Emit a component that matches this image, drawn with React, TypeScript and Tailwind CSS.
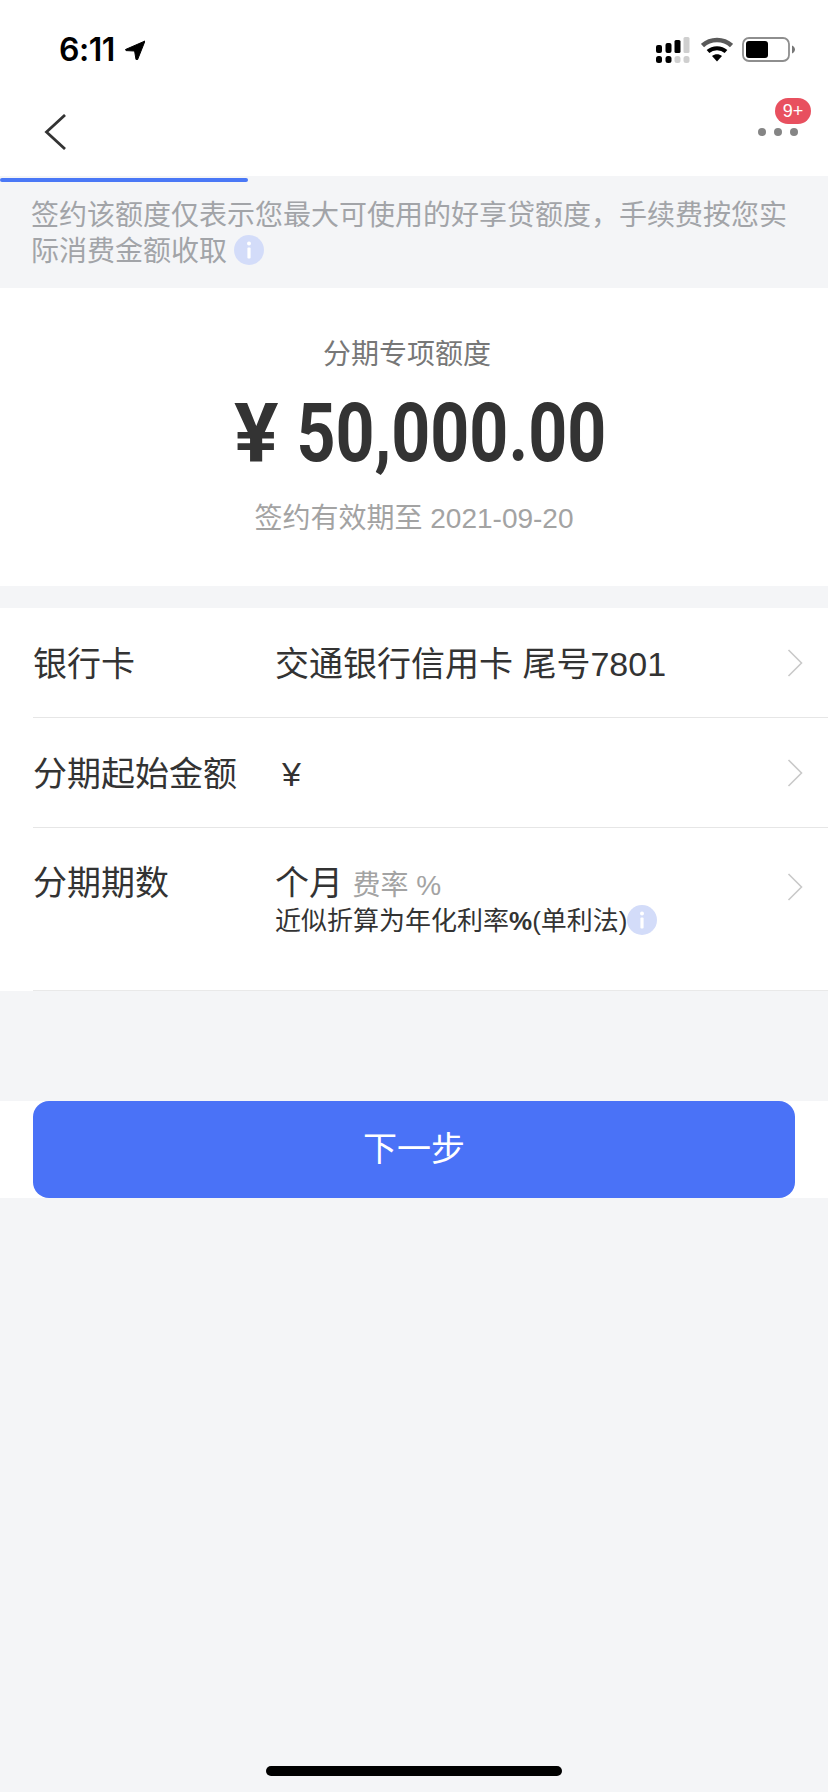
import type { ReactNode } from 'react';

function InfoIcon({ className }: { className?: string }) {
  return (
    <svg className={className} viewBox="0 0 30 30" fill="none">
      <circle cx="15" cy="15" r="15" fill="#d3dcf9" />
      <circle cx="15" cy="8.5" r="2" fill="#fff" />
      <rect x="13.4" y="12.5" width="3.2" height="11" rx="1" fill="#fff" />
    </svg>
  );
}

function Chevron({ className }: { className?: string }) {
  return (
    <svg className={className} viewBox="0 0 16 28" fill="none">
      <path d="M1.5 1 L14.5 14 L1.5 27" stroke="#c9c9c9" strokeWidth="1.6" />
    </svg>
  );
}

function StatusBar() {
  return (
    <div className="h-[88px] pt-[37px] pl-[59px] pr-[33px] flex justify-between items-start bg-white">
      <div className="flex items-center h-[25px]">
        <span className="font-['Inter',sans-serif] font-semibold text-[32px] leading-[25px] text-black tracking-[-0.5px]">6:11</span>
        <svg className="w-[20px] h-[20px] ml-[10px]" viewBox="0 0 20 20">
          <path d="M20 1 L0.5 9.5 L1 10.6 L9.6 11 L11 19.5 L12.5 19.8 Z" fill="#000" stroke="#000" strokeLinejoin="round" />
        </svg>
      </div>
      <div className="flex items-start">
        <svg className="w-[34px] h-[26px] mr-[11px]" viewBox="0 0 34 26">
          <rect x="0" y="8" width="6" height="8" rx="2" fill="#000" />
          <rect x="9.500" y="6" width="6" height="10" rx="2" fill="#000" />
          <rect x="18.500" y="3" width="6" height="13" rx="1.500" fill="#000" />
          <rect x="27.500" y="0" width="6" height="16" rx="1.500" fill="#cfcfcf" />
          <rect x="0" y="19" width="6" height="7" rx="2.500" fill="#000" />
          <rect x="9.500" y="19" width="6" height="7" rx="2.500" fill="#000" />
          <rect x="18.500" y="19" width="6" height="7" rx="2.500" fill="#cfcfcf" />
          <rect x="27.500" y="19" width="6" height="7" rx="2.500" fill="#cfcfcf" />
        </svg>
        <svg className="w-[32px] h-[25px] mr-[9px]" viewBox="0 0 32 25" fill="none">
          <path d="M1.500 8.500 C9.500 1 22.500 1 30.500 8.500" stroke="#5a5a5a" strokeWidth="4.500" />
          <path d="M7 14.500 C12 10 20 10 25 14.500" stroke="#000" strokeWidth="4" />
          <path d="M11 19 L16 24.500 L21 19 C18 16.500 14 16.500 11 19 Z" fill="#000" />
        </svg>
        <svg className="w-[53px] h-[25px]" viewBox="0 0 53 25" fill="none">
          <rect x="1" y="1" width="46" height="23" rx="6" stroke="#8e8e8e" strokeWidth="1.800" />
          <rect x="4" y="4" width="22" height="17" rx="3" fill="#000" />
          <path d="M50 8.500 C52 9.500 53 11 53 12.500 C53 14 52 15.500 50 16.500 Z" fill="#777" />
        </svg>
      </div>
    </div>
  );
}

function NavBar() {
  return (
    <div className="h-[88px] bg-white flex items-center justify-between pl-[44px] pr-[30px]">
      <svg className="w-[22px] h-[36px]" viewBox="0 0 22 36" fill="none">
        <path d="M21 1 L2.500 18 L21 35" stroke="#333" strokeWidth="2.800" />
      </svg>
      <div className="relative flex gap-[8px]">
        <span className="w-[8px] h-[8px] rounded-full bg-[#858585]" />
        <span className="w-[8px] h-[8px] rounded-full bg-[#858585]" />
        <span className="w-[8px] h-[8px] rounded-full bg-[#858585]" />
        <span className="absolute left-[17px] top-[-30px] w-[36px] h-[26px] rounded-full bg-[#e8505f] text-white text-[18px] leading-[26px] text-center">9+</span>
      </div>
    </div>
  );
}

function Row({ label, children }: { label: string; children: ReactNode }) {
  return (
    <div className="ml-[33px] h-[110px] pr-[25px] border-b border-[#e6e6e6] flex items-center">
      <div className="w-[243px] pt-[2px] text-[34px] leading-[44px] text-[#333]">{label}</div>
      <div className="flex-1 pt-[2px] text-[34px] leading-[44px] text-[#333]">{children}</div>
      <Chevron className="w-[16px] h-[28px]" />
    </div>
  );
}

export default function App() {
  return (
    <div className="relative min-h-[1792px] flex flex-col bg-[#f4f5f7] font-['Liberation_Sans','Noto_Sans_CJK_SC',sans-serif]">
      <StatusBar />
      <NavBar />

      <div className="relative pl-[31px] pt-[22px] pb-[18px] text-[28px] leading-[36px] text-[#a2a4a8]">
        <div className="absolute left-0 top-[2px] w-[248px] h-[4px] rounded-full bg-[#4a78f6]" />
        <p className="w-[760px]">
          签约该额度仅表示您最大可使用的好享贷额度，手续费按您实际消费金额收取
          <InfoIcon className="inline-block w-[30px] h-[30px] ml-[7px] align-[-4px]" />
        </p>
      </div>

      <div className="h-[298px] pt-[47px] bg-white flex flex-col items-center">
        <div className="pr-[14px] text-[28px] leading-[40px] text-[#777]">分期专项额度</div>
        <div className="mt-[13px] pl-[20px] font-['Roboto',sans-serif] font-bold text-[82px] leading-[90px] text-[#333] scale-x-[0.83]">
          <span className="inline-block mr-[6px] scale-x-[1.22]">¥</span> 50,000.00
        </div>
        <div className="mt-[21px] text-[28px] leading-[40px] text-[#a3a3a3]">签约有效期至 2021-09-20</div>
      </div>

      <div className="mt-[22px] bg-white">
        <Row label="银行卡">
          <span className="ml-[-1px]">交通银行信用卡 尾号7801</span>
        </Row>
        <Row label="分期起始金额">
          <span className="ml-[6px]">¥</span>
        </Row>
        <div className="ml-[33px] h-[163px] pt-[33px] pr-[25px] border-b border-[#e9e9e9] flex items-start">
          <div className="w-[243px] text-[34px] leading-[44px] text-[#333]">分期期数</div>
          <div className="flex-1 ml-[-1px]">
            <div className="text-[34px] leading-[44px] text-[#333]">
              个月 <span className="text-[28px] text-[#a3a3a3]">费率 %</span>
            </div>
            <div className="flex items-center mt-[-4px] text-[26px] leading-[34px] text-[#333]">
              近似折算为年化利率<b>%</b>(单利法)
              <InfoIcon className="w-[30px] h-[30px] mt-[-2px]" />
            </div>
          </div>
          <Chevron className="w-[16px] h-[28px] mt-[12px]" />
        </div>
      </div>

      <div className="mt-[110px] px-[33px] bg-white">
        <button className="w-full h-[97px] rounded-[16px] bg-[#4a72f7] text-white text-[34px]">下一步</button>
      </div>

      <div className="absolute left-[266px] bottom-[16px] w-[296px] h-[10px] rounded-full bg-black" />
    </div>
  );
}
